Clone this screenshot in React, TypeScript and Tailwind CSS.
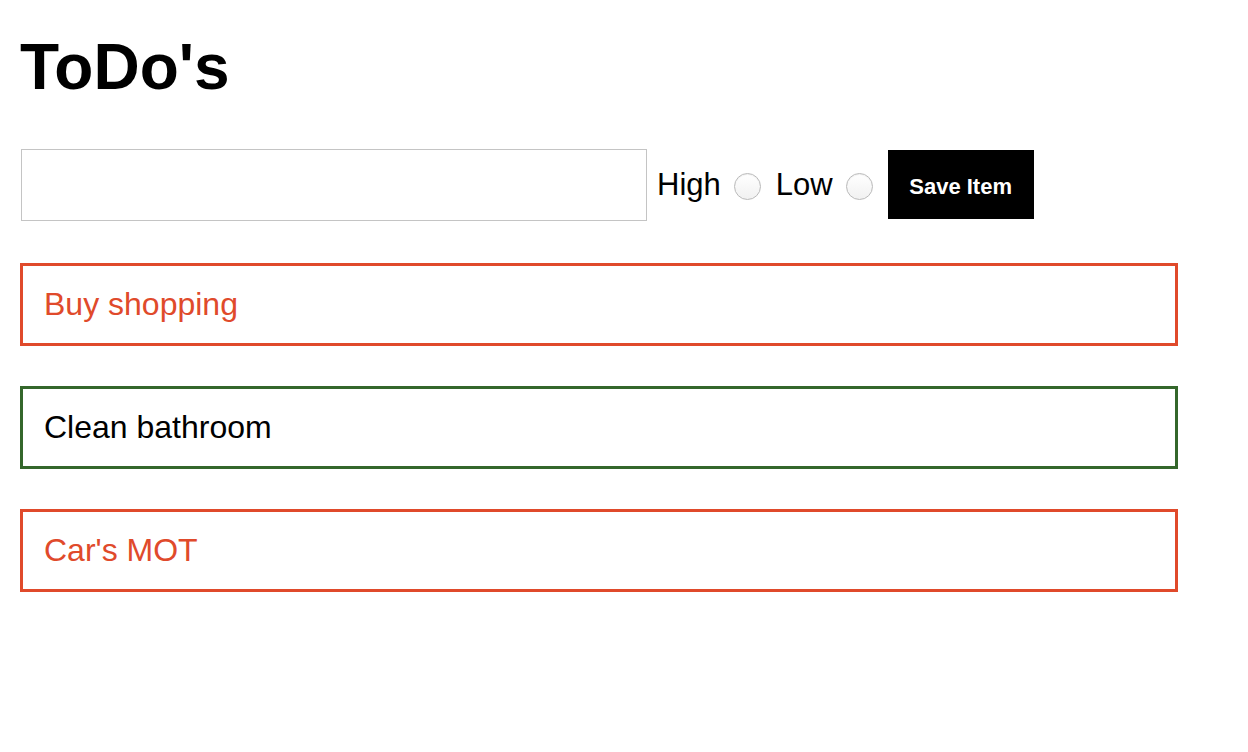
import { useState } from "react";

type Todo = { id: number; text: string; priority: "high" | "low" };

const initial: Todo[] = [
  { id: 1, text: "Buy shopping", priority: "high" },
  { id: 2, text: "Clean bathroom", priority: "low" },
  { id: 3, text: "Car's MOT", priority: "high" },
];

export default function App() {
  const [todos, setTodos] = useState<Todo[]>(initial);
  const [text, setText] = useState("");
  const [priority, setPriority] = useState<"high" | "low" | "">("");

  const save = () => {
    if (!text.trim()) return;
    setTodos([...todos, { id: Date.now(), text, priority: priority === "high" ? "high" : "low" }]);
    setText("");
    setPriority("");
  };

  return (
    <div className="min-h-screen bg-white px-[20px] pt-[31px] font-['Liberation_Sans',Arial,sans-serif] text-black">
      <h1 className="text-[64px] font-bold leading-[1.15]">ToDo's</h1>

      <div className="mt-[44px] flex items-center">
        <input
          value={text}
          onChange={(e) => setText(e.target.value)}
          className="ml-px h-[72px] w-[626px] border border-[#c4c4c4] px-3 text-[24px] outline-none"
        />
        <label className="ml-[10px] text-[31px] leading-none">High</label>
        <input
          type="radio"
          name="priority"
          checked={priority === "high"}
          onChange={() => setPriority("high")}
          className="ml-[13px] mt-[3px] h-[27px] w-[27px] appearance-none rounded-full border border-[#bababa] bg-gradient-to-b from-white to-[#f1f1f1] shadow-[inset_0_1px_1px_rgba(0,0,0,0.06)] checked:border-[6px] checked:border-[#3b82f6]"
        />
        <label className="ml-[15px] text-[31px] leading-none">Low</label>
        <input
          type="radio"
          name="priority"
          checked={priority === "low"}
          onChange={() => setPriority("low")}
          className="ml-[13px] mt-[3px] h-[27px] w-[27px] appearance-none rounded-full border border-[#bababa] bg-gradient-to-b from-white to-[#f1f1f1] shadow-[inset_0_1px_1px_rgba(0,0,0,0.06)] checked:border-[6px] checked:border-[#3b82f6]"
        />
        <button
          onClick={save}
          className="ml-[15px] h-[69px] w-[146px] bg-black pt-[3px] text-[22px] font-bold text-white"
        >
          Save Item
        </button>
      </div>

      <ul className="mt-[42px] flex flex-col gap-[40px]">
        {todos.map((t) => (
          <li
            key={t.id}
            className={`flex h-[83px] w-[1158px] items-center border-[3px] px-[21px] text-[32px] leading-[1.15] ${
              t.priority === "high"
                ? "border-[#e04a2b] text-[#e04a2b]"
                : "border-[#34672b] text-black"
            }`}
          >
            {t.text}
          </li>
        ))}
      </ul>
    </div>
  );
}
